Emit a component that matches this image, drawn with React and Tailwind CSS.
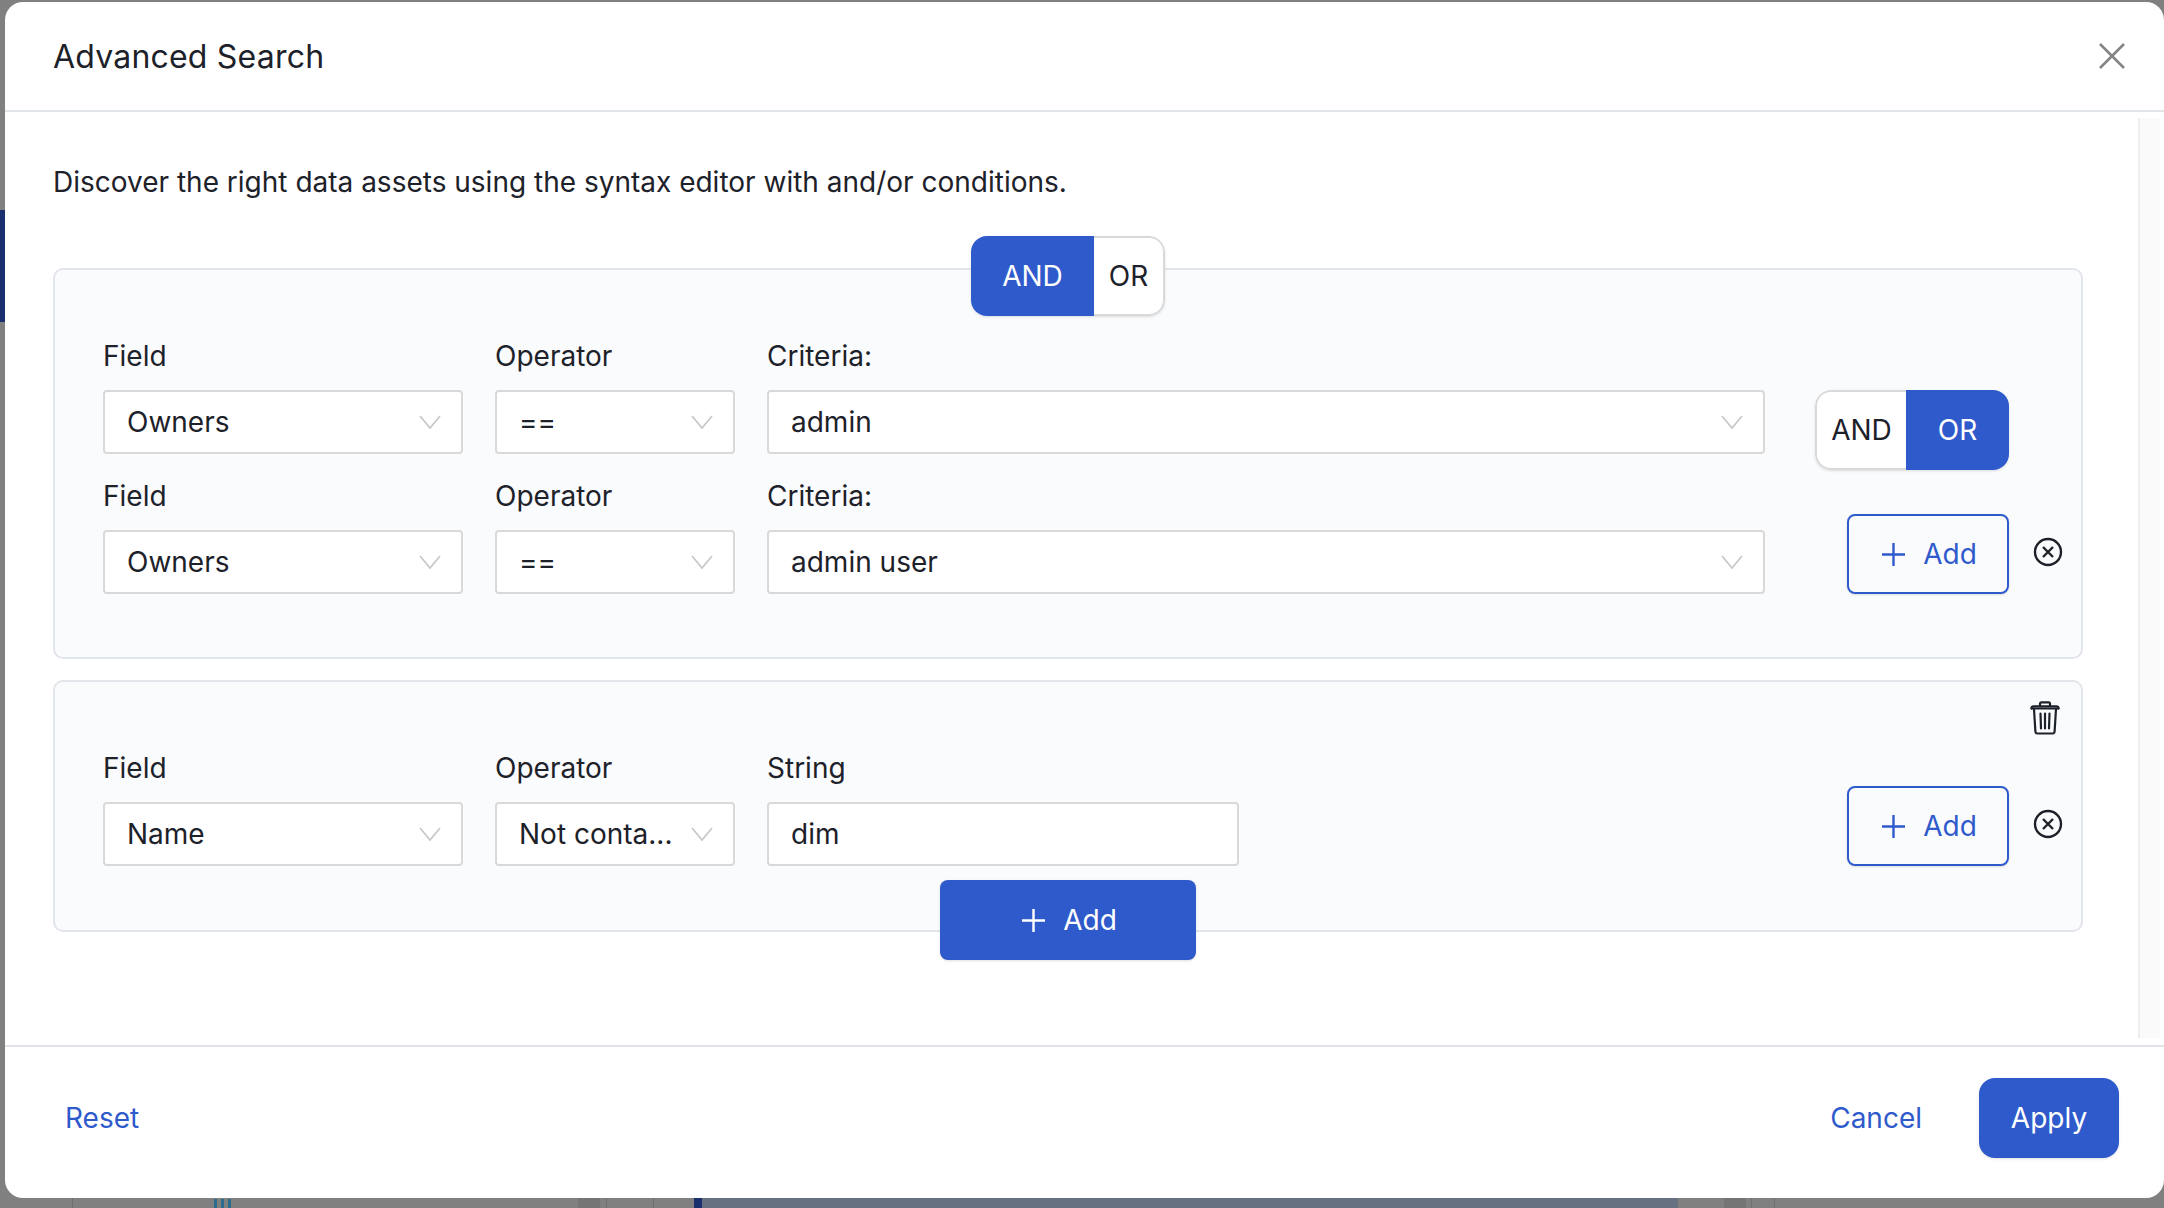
import React from 'react';

const Chevron = () => (
    <svg className="absolute right-[20px] top-1/2 -translate-y-1/2" width="22" height="14" viewBox="0 0 22 14" fill="none">
        <path d="M1 1l10 12L21 1" stroke="#c8c9cc" strokeWidth="1.800" />
    </svg>
);

const Plus = ({ color }) => (
    <svg width="25" height="25" viewBox="0 0 25 25" fill="none">
        <path d="M12.500 1v23M1 12.500h23" stroke={color} strokeWidth="2.400" />
    </svg>
);

const CloseCircle = () => (
    <svg className="mb-[4px]" width="30" height="30" viewBox="0 0 30 30" fill="none">
        <circle cx="15" cy="15" r="13" stroke="#1d2129" strokeWidth="2.400" />
        <path d="M10 10l10 10M20 10L10 20" stroke="#1d2129" strokeWidth="2.400" />
    </svg>
);

const Trash = () => (
    <svg width="30" height="34" viewBox="0 0 30 34" fill="none" stroke="#1d2129" strokeWidth="2.200" strokeLinecap="round" strokeLinejoin="round">
        <path d="M1.500 7.500c0-1.500.7-2.200 2.200-2.200h22.600c1.500 0 2.200.7 2.200 2.200" />
        <path d="M1.500 7.500h27" />
        <path d="M10 5V2.800c0-.9.5-1.400 1.400-1.400h7.200c.9 0 1.400.5 1.400 1.400V5" />
        <path d="M4 8l1.400 22.500c.1 1.300.8 2 2 2h15.200c1.200 0 1.900-.7 2-2L26 8" />
        <path d="M10.500 12.500l.5 15M15 12.500v15M19.500 12.500l-.5 15" />
    </svg>
);

const Field = ({ label, width, children }) => (
    <div className={`flex flex-col ${width}`}>
        <div className="h-[40px] leading-[40px] mb-[14px]">{label}</div>
        {children}
    </div>
);

const Select = ({ value }) => (
    <div className="relative h-[64px] bg-white border-2 border-[#d9d9d9] rounded-[4px] flex items-center pl-[22px]">
        <span>{value}</span>
        <Chevron />
    </div>
);

const ConditionRow = ({ field, op, label3, criteria }) => (
    <div className="flex gap-[32px]">
        <Field label="Field" width="w-[360px]"><Select value={field} /></Field>
        <Field label="Operator" width="w-[240px]"><Select value={op} /></Field>
        <Field label={label3} width="w-[998px]"><Select value={criteria} /></Field>
    </div>
);

const AddOutline = () => (
    <div className="flex items-center gap-[24px]">
        <button className="w-[162px] h-[80px] border-2 border-[#2f5acb] rounded-[8px] flex items-center justify-center gap-[17px] pl-[2px] text-[#2f5acb] shadow-sm">
            <Plus color="#2f5acb" />
            <span>Add</span>
        </button>
        <CloseCircle />
    </div>
);

const Toggle = ({ active }) => (
    <div className="flex w-[194px] h-[80px] rounded-[16px] overflow-hidden shadow-sm">
        <div className={active === 'AND'
            ? 'w-[123px] bg-[#2f5acb] text-white flex items-center justify-center'
            : 'w-[91px] bg-white text-[#1d2129] border-2 border-r-0 border-[#d9d9d9] rounded-l-[16px] flex items-center justify-center'}>AND</div>
        <div className={active === 'AND'
            ? 'flex-1 bg-white text-[#1d2129] border-2 border-l-0 border-[#d9d9d9] rounded-r-[16px] flex items-center justify-center'
            : 'flex-1 bg-[#2f5acb] text-white flex items-center justify-center'}>OR</div>
    </div>
);

export default function App() {
    return (
        <div className="relative w-full h-[1208px] overflow-hidden bg-[#808080] pt-[2px] pl-[5px] text-[28px] text-[#1d2129] font-['Inter',sans-serif]">
            {/* page behind the backdrop */}
            <div className="absolute left-0 top-[210px] w-[5px] h-[112px] bg-[#1a2f6e]"></div>
            <div className="absolute left-[72px] bottom-0 w-px h-[10px] bg-[#6f6f6f]"></div>
            <div className="absolute left-[214px] bottom-0 w-[20px] h-[9px] bg-[repeating-linear-gradient(90deg,#2b6d8f_0,#2b6d8f_3px,transparent_3px,transparent_7px)]"></div>
            <div className="absolute left-[578px] bottom-0 w-[22px] h-[10px] bg-[#757575]"></div>
            <div className="absolute left-[606px] bottom-0 w-px h-[10px] bg-[#6f6f6f]"></div>
            <div className="absolute left-[653px] bottom-0 w-px h-[10px] bg-[#6f6f6f]"></div>
            <div className="absolute left-[694px] bottom-0 w-[8px] h-[10px] bg-[#1a2f6e]"></div>
            <div className="absolute left-[702px] bottom-0 w-[976px] h-[10px] bg-[#667080]"></div>
            <div className="absolute left-[1724px] bottom-0 w-[22px] h-[10px] bg-[#757575]"></div>
            <div className="absolute left-[1751px] bottom-0 w-px h-[10px] bg-[#6f6f6f]"></div>
            <div className="absolute left-[1774px] bottom-0 w-px h-[10px] bg-[#6f6f6f]"></div>

            {/* modal */}
            <div className="relative flex flex-col h-[1196px] bg-white rounded-[18px] overflow-hidden">
                <div className="flex items-center justify-between h-[110px] pl-[48px] pr-[39px] border-b-2 border-[#e0e4e8] shrink-0">
                    <h2 className="mt-[2px] text-[32px] font-normal tracking-[0.2px]">Advanced Search</h2>
                    <svg width="26" height="26" viewBox="0 0 26 26" fill="none">
                        <path d="M1 1l24 24M25 1L1 25" stroke="#858585" strokeWidth="2.600" />
                    </svg>
                </div>

                <div className="flex flex-1 min-h-0">
                    <div className="flex-1 pl-[48px] pr-[55px] pt-[50px]">
                        <p className="h-[40px] leading-[40px]">Discover the right data assets using the syntax editor with and/or conditions.</p>

                        {/* first group */}
                        <div className="relative mt-[66px] flex justify-between bg-[#fafbfd] border-2 border-[#e2e5eb] rounded-[10px] pl-[48px] pr-[18px] pt-[66px] pb-[63px]">
                            <div className="absolute left-1/2 -translate-x-1/2 -top-[34px]">
                                <Toggle active="AND" />
                            </div>
                            <div className="flex flex-col gap-[22px]">
                                <ConditionRow field="Owners" op="==" label3="Criteria:" criteria="admin" />
                                <ConditionRow field="Owners" op="==" label3="Criteria:" criteria="admin user" />
                            </div>
                            <div className="flex flex-col items-start pt-[54px] gap-[44px]">
                                <Toggle active="OR" />
                                <div className="ml-[32px]"><AddOutline /></div>
                            </div>
                        </div>

                        {/* second group */}
                        <div className="relative mt-[21px] flex justify-between bg-[#fafbfd] border-2 border-[#e2e5eb] rounded-[10px] pl-[48px] pr-[18px] pt-[66px] pb-[64px]">
                            <div className="absolute right-[21px] top-[19px]">
                                <Trash />
                            </div>
                            <div className="flex gap-[32px]">
                                <Field label="Field" width="w-[360px]"><Select value="Name" /></Field>
                                <Field label="Operator" width="w-[240px]"><Select value="Not conta..." /></Field>
                                <Field label="String" width="w-[472px]">
                                    <div className="h-[64px] bg-white border-2 border-[#d9d9d9] rounded-[4px] flex items-center pl-[22px]">dim</div>
                                </Field>
                            </div>
                            <div className="pt-[38px]">
                                <AddOutline />
                            </div>
                            <button className="absolute left-1/2 -translate-x-1/2 -bottom-[30px] w-[256px] h-[80px] bg-[#2f5acb] text-white rounded-[8px] flex items-center justify-center gap-[17px] pl-[2px] shadow-sm">
                                <Plus color="#ffffff" />
                                <span>Add</span>
                            </button>
                        </div>
                    </div>

                    {/* scrollbar track */}
                    <div className="w-[22px] mt-[6px] mb-[7px] mr-[4px] bg-[#fafafa] border-l-2 border-[#eeeeee]"></div>
                </div>

                <div className="flex items-center justify-between h-[153px] shrink-0 border-t-2 border-[#e0e4e8] pl-[60px] pr-[45px] pb-[10px] text-[#2f5acb]">
                    <span>Reset</span>
                    <div className="flex items-center gap-[57px]">
                        <span>Cancel</span>
                        <button className="w-[140px] h-[80px] bg-[#2f5acb] text-white rounded-[16px] shadow-sm">Apply</button>
                    </div>
                </div>
            </div>
        </div>
    );
}
